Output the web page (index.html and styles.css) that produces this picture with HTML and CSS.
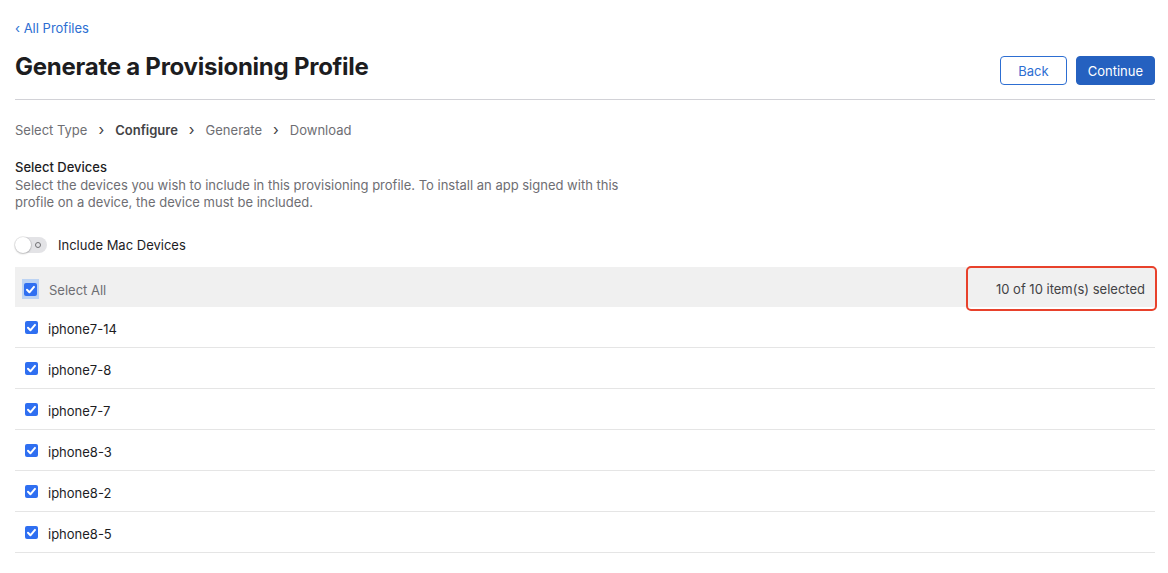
FILE: index.html
```html
<!DOCTYPE html>
<html>
  <head>
    <title>Generate a Provisioning Profile</title>
    <link rel="stylesheet" href="styles.css">
  </head>
  <body>
    <div class="page">
      <a class="back-link" href="#">&lsaquo; All Profiles</a>

      <header class="page-header">
        <h1>Generate a Provisioning Profile</h1>
        <div class="actions">
          <button class="btn btn-secondary">Back</button>
          <button class="btn btn-primary">Continue</button>
        </div>
      </header>

      <nav class="steps">
        <span>Select Type</span>
        <span class="sep">&rsaquo;</span>
        <span class="current">Configure</span>
        <span class="sep">&rsaquo;</span>
        <span>Generate</span>
        <span class="sep">&rsaquo;</span>
        <span>Download</span>
      </nav>

      <section class="intro">
        <h2>Select Devices</h2>
        <p>Select the devices you wish to include in this provisioning profile. To install an app signed with this profile on a device, the device must be included.</p>
      </section>

      <label class="toggle-row">
        <span class="toggle"><span class="knob"></span><span class="off-mark"></span></span>
        Include Mac Devices
      </label>

      <div class="device-list">
        <div class="list-head">
          <div class="cell">
            <span class="focus-ring"><span class="check"></span></span>
            <span class="muted">Select All</span>
          </div>
          <div class="count">10 of 10 item(s) selected</div>
        </div>
        <ul class="devices">
          <li><span class="check"></span><span class="name">iphone7-14</span></li>
          <li><span class="check"></span><span class="name">iphone7-8</span></li>
          <li><span class="check"></span><span class="name">iphone7-7</span></li>
          <li><span class="check"></span><span class="name">iphone8-3</span></li>
          <li><span class="check"></span><span class="name">iphone8-2</span></li>
          <li><span class="check"></span><span class="name">iphone8-5</span></li>
        </ul>
      </div>
    </div>
  </body>
</html>
```

FILE: styles.css
```css
/* Global styles */
body {
  font-family: Inter, "Noto Sans", Arial, sans-serif;
  font-size: 13px;
  color: #1d1d1f;
  margin: 0;
  padding: 0;
  background: #ffffff;
}

.page {
  padding: 19px 13px 0 15px;
}

a {
  text-decoration: none;
}

/* Header */
.back-link {
  display: block;
  color: #2d6ed2;
  font-size: 13px;
  line-height: 18px;
}

.page-header {
  display: flex;
  justify-content: space-between;
  align-items: flex-end;
  padding: 15px 0 14px;
  border-bottom: 1px solid #d2d2d7;
}

h1 {
  font-size: 24px;
  font-weight: 700;
  letter-spacing: -0.25px;
  margin: 0 0 3px;
  line-height: 30px;
}

.actions {
  display: flex;
  gap: 9px;
}

.btn {
  font-family: inherit;
  font-size: 13px;
  height: 29px;
  border-radius: 4px;
  padding: 0 17px;
  cursor: pointer;
}

.btn-secondary {
  background: #ffffff;
  color: #2d6ed2;
  border: 1px solid #2d6ed2;
}

.btn-primary {
  background: #2561c0;
  color: #ffffff;
  border: 1px solid #2561c0;
  padding: 0 11px;
}

/* Steps */
.steps {
  display: flex;
  gap: 11px;
  color: #6e6e73;
  line-height: 18px;
  margin-top: 21px;
}

.steps .current {
  color: #424245;
  font-weight: 600;
}

.steps .sep {
  color: #424245;
  font-size: 15px;
}

/* Intro */
.intro {
  margin-top: 19px;
  width: 615px;
}

.intro h2 {
  font-size: 13px;
  font-weight: 500;
  margin: 0;
  line-height: 18px;
}

.intro p {
  color: #6e6e73;
  margin: 1px 0 0;
  line-height: 17px;
}

/* Toggle */
.toggle-row {
  display: flex;
  align-items: center;
  gap: 11px;
  margin-top: 25px;
  line-height: 18px;
  color: #1d1d1f;
}

.toggle {
  position: relative;
  width: 32px;
  height: 16px;
  border-radius: 8px;
  background: #e3e3e6;
}

.toggle .knob {
  position: absolute;
  left: 0;
  top: 0;
  width: 16px;
  height: 16px;
  border-radius: 50%;
  background: #ffffff;
  box-shadow: 0 0 0 1px rgba(0,0,0,0.08), 0 1px 2px rgba(0,0,0,0.2);
}

.toggle .off-mark {
  position: absolute;
  right: 6px;
  top: 5px;
  width: 4px;
  height: 4px;
  border: 1px solid #707073;
  border-radius: 50%;
}

/* Device list */
.device-list {
  margin-top: 13px;
}

.list-head {
  display: flex;
  justify-content: space-between;
  align-items: center;
  background: #f0f0f0;
  height: 40px;
}

.cell {
  display: flex;
  align-items: center;
  padding-left: 7px;
  padding-top: 4px;
}

.muted {
  color: #6e6e73;
  margin-left: 10px;
  padding-top: 1px;
}

.focus-ring {
  display: flex;
  align-items: center;
  justify-content: center;
  width: 17px;
  height: 20px;
  background: #bcd3f3;
}

.count {
  position: relative;
  color: #424245;
  padding-right: 10px;
  padding-top: 4px;
}

.count::after {
  content: "";
  position: absolute;
  left: -30px;
  right: -2px;
  top: -11px;
  bottom: -14px;
  border: 2px solid #e8412b;
  border-radius: 5px;
}

.check {
  display: inline-block;
  flex: none;
  width: 13px;
  height: 13px;
  border-radius: 2px;
  background: #2f6ff1 url("data:image/svg+xml,%3Csvg xmlns='http://www.w3.org/2000/svg' viewBox='0 0 13 13'%3E%3Cpath d='M3 6.8l2.4 2.5L10 3.9' fill='none' stroke='white' stroke-width='2' stroke-linecap='round' stroke-linejoin='round'/%3E%3C/svg%3E") no-repeat center;
}

ul.devices {
  list-style: none;
  margin: 0;
  padding: 0;
}

ul.devices li {
  display: flex;
  align-items: center;
  gap: 10px;
  height: 40px;
  padding-left: 10px;
  border-bottom: 1px solid #e5e5e5;
  color: #1d1d1f;
}

ul.devices .name {
  padding-top: 4px;
}
```
